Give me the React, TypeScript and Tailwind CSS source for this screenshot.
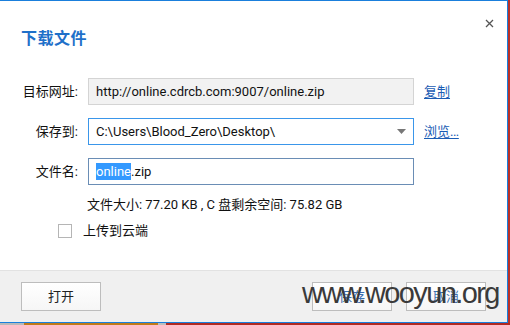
import React from "react";

const font = { fontFamily: 'Roboto,"Noto Sans CJK SC",sans-serif' };

function Btn({ children }: { children: React.ReactNode }) {
  return (
    <button className="w-[80px] h-[29px] border border-[#bdbdbd] bg-gradient-to-b from-white to-[#f6f6f6] text-[13px] leading-[17px] text-[#222] flex items-center justify-center">
      {children}
    </button>
  );
}

export default function App() {
  return (
    <div className="relative w-[510px] h-[325px] overflow-hidden bg-[#b8322a]" style={font}>
      <div className="flex flex-col w-[508px] h-[323px] bg-white border-t border-r border-b border-[#1a7fdc]">
        <div className="flex-1 flex flex-col relative">
          <div className="flex items-center pl-[21px] pt-[25px] h-[50px]">
            <span className="text-[16px] font-bold text-[#1f70c9] leading-none tracking-[0.5px]">下载文件</span>
          </div>
          <svg className="absolute left-[485px] top-[18px]" width="9" height="9" viewBox="0 0 9 9">
            <path d="M1 1L8 8M8 1L1 8" stroke="#555" strokeWidth="1.3" />
          </svg>
          <div className="grid grid-cols-[78px_326px_auto] gap-x-[10px] mt-[27px] items-center text-[13px] leading-[17px] text-[#111]">
            <span className="text-right">目标网址:</span>
            <div className="h-[27px] border border-[#d4d4d4] bg-[#f2f2f2] flex items-center pl-[7px]">
              http://online.cdrcb.com:9007/online.zip
            </div>
            <a className="text-[#1a5cb4] underline underline-offset-2 justify-self-start">复制</a>

            <span className="text-right mt-[13px]">保存到:</span>
            <div className="mt-[13px] h-[27px] border border-[#3a96ea] bg-white flex items-center pl-[7px] pr-[7px] justify-between">
              <span>C:\Users\Blood_Zero\Desktop\</span>
              <svg width="9" height="5" viewBox="0 0 9 5"><path d="M0 0H9L4.5 5Z" fill="#777" /></svg>
            </div>
            <a className="mt-[13px] text-[#1a5cb4] underline underline-offset-2 justify-self-start whitespace-nowrap">
              浏览<span className="tracking-[-0.5px]">...</span>
            </a>

            <span className="text-right mt-[13px]">文件名:</span>
            <div className="mt-[13px] h-[27px] border border-[#6a8db5] bg-white flex items-center pl-[7px]">
              <span className="bg-[#3399ff] text-white">online</span>
              <span>.zip</span>
            </div>
            <span />
          </div>
          <div className="pl-[87px] mt-[11px] text-[13px] leading-[17px] text-[#111] whitespace-pre">文件大小: 77.20 KB , C 盘剩余空间: 75.82 GB</div>
          <div className="flex items-center pl-[58px] mt-[9px] h-[17px] text-[13px] leading-[17px] text-[#111]">
            <span className="w-[14px] h-[14px] border border-[#b5b5b5] bg-white" />
            <span className="ml-[11px]">上传到云端</span>
          </div>
        </div>
        <div className="h-[52px] bg-[#f0f0f0] border-t border-[#e2e2e2] flex items-start justify-between px-[21px] pt-[11px]">
          <Btn>打开</Btn>
          <div className="flex gap-[14px]">
            <Btn><span className="text-[#3b6fb0]">保存</span></Btn>
            <Btn><span className="text-[#3b6fb0]">取消</span></Btn>
          </div>
        </div>
      </div>
      <div className="flex h-[2px]">
        <div className="w-[24px] bg-[#b9b9b9]" />
        <div className="w-[134px] bg-[#c07a1a]" />
        <div className="w-[8px] bg-[#bdbdbd]" />
        <div className="flex-1 bg-[#b02a22]" />
      </div>
      <div
        className="absolute left-[302px] top-[279px] text-[29px] leading-none text-[#3a3a3a] tracking-[-1.6px] pointer-events-none"
        style={{ fontFamily: '"Liberation Sans",Arial,sans-serif' }}
      >
        www.wooyun.org
      </div>
    </div>
  );
}
